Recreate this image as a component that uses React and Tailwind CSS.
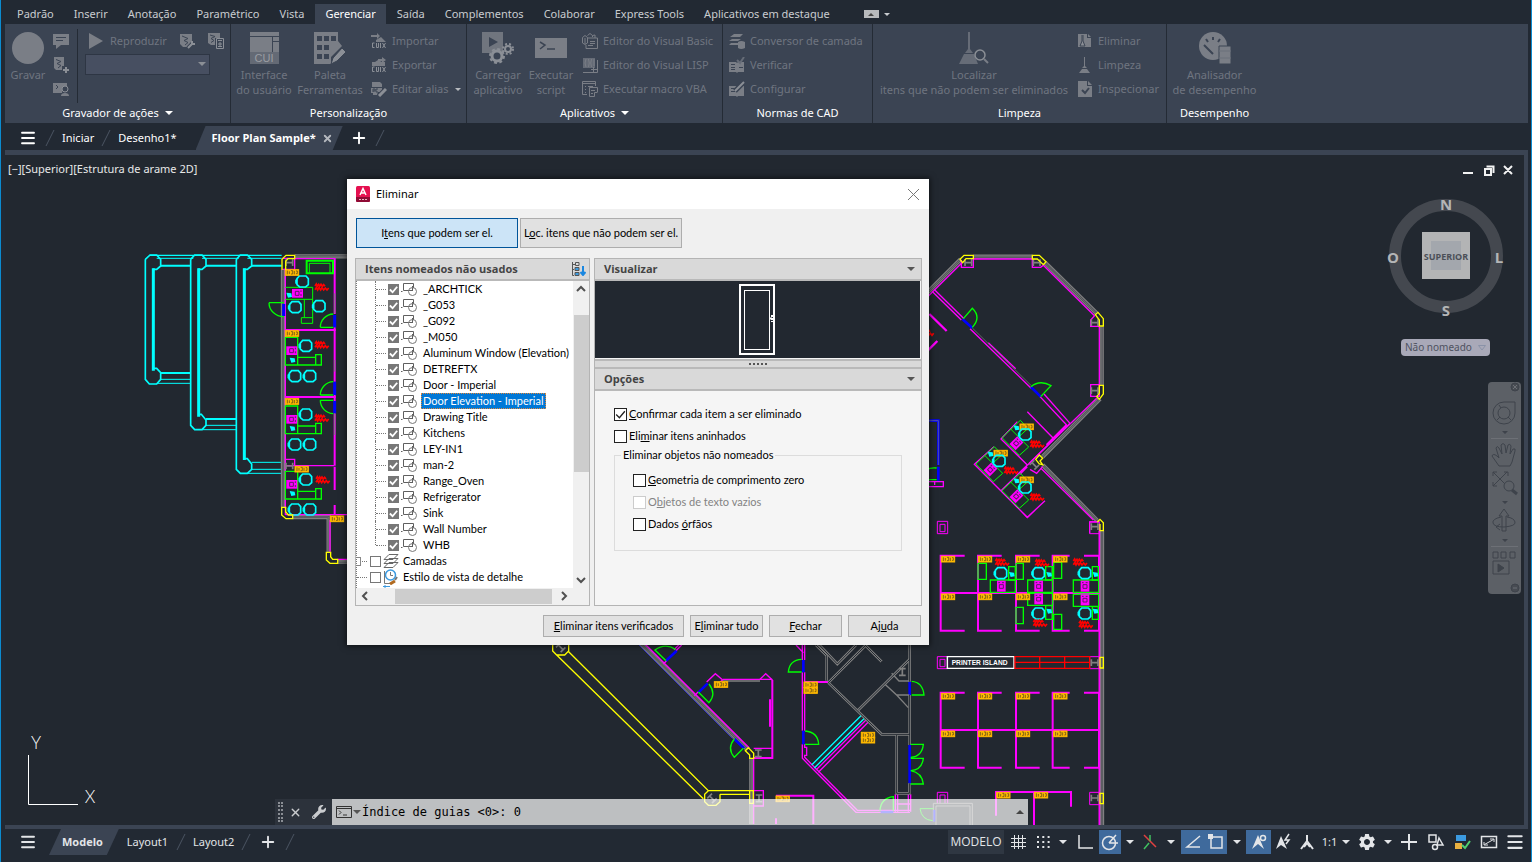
import { useState } from 'react'
import clsx from 'clsx'
import { Menu, Plus, X } from 'lucide-react'
import { FaWrench } from 'react-icons/fa'
import { MdSettings } from 'react-icons/md'

const ribbonTabs = [
  'Padrão', 'Inserir', 'Anotação', 'Paramétrico', 'Vista', 'Gerenciar', 'Saída',
  'Complementos', 'Colaborar', 'Express Tools', 'Aplicativos em destaque'
]

const blocks = [
  '_ARCHTICK', '_G053', '_G092', '_M050', 'Aluminum Window (Elevation)', 'DETREFTX', 'Door - Imperial',
  'Door Elevation - Imperial', 'Drawing Title', 'Kitchens', 'LEY-IN1', 'man-2', 'Range_Oven',
  'Refrigerator', 'Sink', 'Wall Number', 'WHB'
]

const Caret = ({ className }) => (
  <svg viewBox="0 0 8 4" className={clsx('h-1 w-2 shrink-0', className)} fill="currentColor">
    <path d="M0 0H8L4 4Z" />
  </svg>
)

/* ---------- ribbon ---------- */

const Icon = ({ size = 16, children }) => (
  <svg width={size} height={size} viewBox={`0 0 ${size} ${size}`} className="shrink-0" fill="#7a7e86">
    {children}
  </svg>
)

const hole = '#3b4453'

const icons = {
  note: <path d="M0 1H16V12H8L3 16V12H0ZM3 4V5H13V4ZM3 7V8H10V7Z" fillRule="evenodd" />,
  macroAdd: (
    <>
      <path d="M1 0H11V9H9V13H3L1 11Z" />
      <path d="M3 2.500L8 4.500L4 6.500L8 8.500L5 11" fill="none" stroke={hole} />
      <path d="M13 10V16M10 13H16" fill="none" stroke="#8b8f96" strokeWidth="2" />
    </>
  ),
  macroUser: (
    <>
      <path d="M0 2H14V6H9V12H0Z" />
      <path d="M3 4L5 6L3 8" fill="none" stroke={hole} />
      <circle cx="12" cy="8" r="3" fill={hole} stroke="#8b8f96" />
      <path d="M8 15Q8 12 12 12T16 15Z" />
    </>
  ),
  macroEdit: (
    <>
      <path d="M0 1H12V8L8 14H3L0 11Z" />
      <path d="M2 3L8 5.500L4 7.500L8 9.500L5 12" fill="none" stroke={hole} />
      <path d="M8 15L14 9" fill="none" stroke={hole} strokeWidth="4" />
      <path d="M8 15L13 10M12 8V11H15" fill="none" stroke="#8b8f96" strokeWidth="2" />
    </>
  ),
  macroList: (
    <>
      <path d="M0 0H12V5H7V12H3L0 10Z" />
      <path d="M2 2L7 3.500L3 5.500L6 7.500L3 9.500" fill="none" stroke={hole} />
      <path d="M8.500 5.500H15.500V15.500H8.500Z" fill={hole} stroke="#8b8f96" />
      <path d="M10 7.500H14M10 13.500H14M10 11H14M12 9V13" fill="none" stroke="#8b8f96" />
    </>
  ),
  importar: (
    <>
      <path d="M0 2H6V0L9 3L6 6V4H0ZM5 9V7L10 4L15 9Z" />
      <path d="M3.500 10H1.500V14.500H3.500M5.500 10V14.500H7.500V10M9.500 10V15M11.500 10L14.500 15M14.500 10L11.500 15" fill="none" stroke="#8b8f96" />
    </>
  ),
  exportar: (
    <>
      <path d="M1 9V5H4L7 3V2H11V0L15 3L11 6V4L9 5H14V9Z" />
      <path d="M3.500 10H1.500V14.500H3.500M5.500 10V14.500H7.500V10M9.500 10V15M11.500 10L14.500 15M14.500 10L11.500 15" fill="none" stroke="#8b8f96" />
    </>
  ),
  alias: (
    <>
      <path d="M1 1H9L11 3V6H1ZM0 7H11V11H7L6 14H2V12H0Z" />
      <path d="M2 8V11M2 8H4V10H2M7 8H5V11H7" fill="none" stroke={hole} />
      <path d="M8 15L15 8" fill="none" stroke={hole} strokeWidth="5" />
      <path d="M8 15L15 8" fill="none" stroke="#8b8f96" strokeWidth="3" />
    </>
  ),
  basic: (
    <g fill="none" stroke="#7a7e86">
      <path d="M.500 4.500L3 2.500L5.500 4.500V10L3 11.500L.500 10ZM5.500 2.500L8 .500L10.500 2.500V4M10.500 2.500L13 2V5M3 5V11M5.500 5H15.500V15.500H4V12M8 8.500H13M8 10.500H13M6 12.500H11" />
    </g>
  ),
  lisp: (
    <g fill="none" stroke="#7a7e86">
      <path d="M1 1H13V11H1Z" fill="#656b76" stroke="none" />
      <path d="M4 2Q2 6 4 10M6.500 2Q8 6 6.500 10M9.500 2Q8 6 9.500 10M12 2V9M15.500 3V15.500H1M9 12.500H15M11.500 10V15" />
    </g>
  ),
  macroVba: (
    <g fill="none" stroke="#7a7e86">
      <path d="M.500 .500H13.500V5M.500 .500V13.500H5M0 2.500H13M3 5.500H4M6 5.500H11M3 8.500H4M3 11.500H4M7.500 6.500H15.500V11M7.500 6.500V15.500H12.500V11.500H15.500M9 9.500H13M9 12.500H11" />
    </g>
  ),
  layers: (
    <>
      <path d="M5 1H14L11 4H1ZM3 6H12L9 8H0ZM2 10H9V12H0Z" />
      <path d="M9 9Q12 7 16 9V15Q12 17 9 15Z" />
    </>
  ),
  book: (
    <>
      <path d="M0 5H7L8 6L9 5H15V15H9L8 16L7 15H0ZM2 7V8H6V7ZM2 10V11H6V10ZM10 10V11H14V10ZM2 12V13H6V12Z" fillRule="evenodd" />
      <path d="M8 3L11 6L15 0" fill="none" stroke="#666c77" strokeWidth="2" />
    </>
  ),
  bookEdit: (
    <>
      <path d="M0 5H7L8 6L9 5H15V15H9L8 16L7 15H0ZM2 7V8H6V7ZM2 10V11H6V10Z" fillRule="evenodd" />
      <path d="M6 10L14 2" fill="none" stroke={hole} strokeWidth="5" />
      <path d="M6 10L15 1" fill="none" stroke="#8b8f96" strokeWidth="2" />
    </>
  ),
  purge: (
    <>
      <path d="M1 1H10V5H14V14H1ZM11 1L14 4H11Z" />
      <path d="M5 2V8L3 13H8L6 8V2" fill="#8b8f96" stroke={hole} />
    </>
  ),
  broom: <path d="M7 0H8V9L10 11H5L7 9ZM5 12H10L13 16H2Z" />,
  inspect: (
    <>
      <path d="M1 0H10V5H15V16H1ZM11 0L15 4H11Z" />
      <path d="M5 9L8 12L12 7" fill="none" stroke={hole} strokeWidth="2" />
    </>
  )
}

const bigIcons = {
  record: <circle cx="16" cy="16" r="16" />,
  cui: (
    <>
      <path d="M2 0H31V4H2ZM2 5H24V20H2ZM25 5H31V9H25ZM25 10H31V20H25Z" />
      <path d="M2 20H31V32H2Z" fill="#646a75" />
      <text x="16" y="30" textAnchor="middle" fontSize="11" fill="#9a9da3" fontFamily="Liberation Sans, sans-serif">CUI</text>
    </>
  ),
  palette: (
    <>
      <path d="M0 0H24V9L28 14L17 25V32H0ZM3 4V9H8V4ZM10 4V9H15V4ZM17 4V9H22V4ZM3 13V18H8V13ZM10 13V18H15V13ZM3 22V27H8V22ZM10 22V27H15V22Z" fillRule="evenodd" />
      <path d="M17 32L19 26L28 16L32 20L23 29Z" fill="#8b8f96" stroke={hole} />
    </>
  ),
  load: (
    <>
      <path d="M0 0H21V21H0Z" fill="#70757e" />
      <path d="M7 5L16 10L7 15Z" fill={hole} />
      <circle cx="15" cy="24" r="5" fill={hole} stroke="#8b8f96" strokeWidth="3" />
      <circle cx="15" cy="24" r="7" fill="none" stroke="#8b8f96" strokeWidth="2" strokeDasharray="3 2.500" />
      <circle cx="26" cy="17" r="3" fill={hole} stroke="#8b8f96" strokeWidth="2" />
      <circle cx="26" cy="17" r="5" fill="none" stroke="#8b8f96" strokeWidth="2" strokeDasharray="2 2" />
    </>
  ),
  script: (
    <>
      <path d="M0 6H32V26H0Z" />
      <path d="M5 10L10 13L5 17M12 17H20" fill="none" stroke={hole} strokeWidth="1.500" />
    </>
  ),
  find: (
    <>
      <path d="M10 0H12V17L15 21H7L10 17ZM6 22H16L20 32H1Z" fill="#666c77" />
      <circle cx="22" cy="23" r="5" fill={hole} stroke="#8b8f96" strokeWidth="1.500" />
      <path d="M26 27L30 31" stroke="#7a7e86" strokeWidth="2" />
    </>
  ),
  gauge: (
    <>
      <circle cx="14" cy="14" r="14" />
      <path d="M5 13L14 22M14 5V8M7 7L9 10M21 7L19 10" fill="none" stroke={hole} strokeWidth="2" />
      <path d="M20 14H32V32H20Z" stroke={hole} />
      <path d="M20 19H32M20 26H32" stroke="#6a707a" />
    </>
  )
}

const BigButton = ({ icon, lines, className }) => (
  <button className={clsx('flex shrink-0 flex-col items-center pt-[3px] leading-[15px] whitespace-nowrap', className)}>
    <Icon size={32}>{bigIcons[icon]}</Icon>
    <span className="mt-[3px]">{lines[0]}</span>
    <span>{lines[1]}</span>
  </button>
)

const SmallButton = ({ icon, label, caret }) => (
  <button className="flex h-6 items-center gap-[5px] whitespace-nowrap">
    <Icon>{icons[icon]}</Icon>
    {label}
    {caret && <Caret className="h-[3px] w-1.5 text-[#b8bbc0]" />}
  </button>
)

const Panel = ({ title, caret, className, children }) => (
  <section className={clsx('flex shrink-0 flex-col border-[#242b35]', className)}>
    <div className="flex h-[79px] pt-[5px] text-[#6f7580]">{children}</div>
    <h2 className="flex h-5 items-center justify-center gap-1.5 text-white">
      {title}
      {caret && <Caret />}
    </h2>
  </section>
)

const Ribbon = () => (
  <div className="flex h-[99px] shrink-0 overflow-hidden bg-[#3b4453] text-[11px]">
    <Panel title="Gravador de ações" caret className="w-[226px] border-r">
      <BigButton icon="record" lines={['Gravar']} className="w-[46px]" />
      <div className="flex w-[27px] flex-col border-r border-[#242b35] pl-[2px]">
        {['note', 'macroAdd', 'macroUser'].map(name => (
          <button key={name} aria-label={name} className="flex h-6 items-center"><Icon>{icons[name]}</Icon></button>
        ))}
      </div>
      <div className="flex flex-1 flex-col pl-[7px]">
        <div className="flex h-6 items-center">
          <button className="flex w-[95px] items-center gap-[7px] pl-1">
            <svg className="h-4 w-3.5" viewBox="0 0 14 16" fill="#7a7e86"><path d="M0 0L14 8L0 16Z" /></svg>
            Reproduzir
          </button>
          <button aria-label="Editar macro" className="mr-3"><Icon>{icons.macroEdit}</Icon></button>
          <button aria-label="Preferências"><Icon>{icons.macroList}</Icon></button>
        </div>
        <div className="relative mt-px w-[125px]">
          <select aria-label="Macros" className="h-[21px] w-full appearance-none border border-[#2e3644] bg-[#474f61]">
            <option></option>
          </select>
          <Caret className="pointer-events-none absolute top-2 right-1 text-[#8b8f96]" />
        </div>
      </div>
    </Panel>
    <Panel title="Personalização" className="w-[236px] border-r">
      <BigButton icon="cui" lines={['Interface', 'do usuário']} className="w-[66px]" />
      <BigButton icon="palette" lines={['Paleta', 'Ferramentas']} className="w-[66px]" />
      <div className="flex flex-col pl-2">
        <SmallButton icon="importar" label="Importar" />
        <SmallButton icon="exportar" label="Exportar" />
        <SmallButton icon="alias" label="Editar alias" caret />
      </div>
    </Panel>
    <Panel title="Aplicativos" caret className="w-[256px] border-r">
      <BigButton icon="load" lines={['Carregar', 'aplicativo']} className="w-[62px]" />
      <BigButton icon="script" lines={['Executar', 'script']} className="w-[44px]" />
      <div className="flex flex-col pl-[9px]">
        <SmallButton icon="basic" label="Editor do Visual Basic" />
        <SmallButton icon="lisp" label="Editor do Visual LISP" />
        <SmallButton icon="macroVba" label="Executar macro VBA" />
      </div>
    </Panel>
    <Panel title="Normas de CAD" className="w-[150px] border-r">
      <div className="flex flex-col pl-1.5">
        <SmallButton icon="layers" label="Conversor de camada" />
        <SmallButton icon="book" label="Verificar" />
        <SmallButton icon="bookEdit" label="Configurar" />
      </div>
    </Panel>
    <Panel title="Limpeza" className="w-[294px] border-r">
      <BigButton icon="find" lines={['Localizar', 'itens que não podem ser eliminados']} className="w-[202px]" />
      <div className="flex flex-col pl-0.5">
        <SmallButton icon="purge" label="Eliminar" />
        <SmallButton icon="broom" label="Limpeza" />
        <SmallButton icon="inspect" label="Inspecionar" />
      </div>
    </Panel>
    <Panel title="Desempenho" className="w-[95px]">
      <BigButton icon="gauge" lines={['Analisador', 'de desempenho']} className="w-[95px]" />
    </Panel>
  </div>
)

const Slash = () => (
  <svg className="h-5 w-2.5 shrink-0" viewBox="0 0 10 20" stroke="#4b5462" fill="none"><path d="M1 18L9 2" /></svg>
)

const FileTabs = () => (
  <nav className="flex h-[27px] shrink-0 items-center pt-[3px] text-[11px] text-white">
    <button aria-label="Menu" className="pr-2 pl-3.5"><Menu size={18} strokeWidth={2.5} /></button>
    <Slash />
    <button className="px-[7px]">Iniciar</button>
    <Slash />
    <button className="px-[7px]">Desenho1*</button>
    <button className="ml-3 flex h-full items-center gap-1.5 bg-[#3b4453] pr-2.5 pl-4 font-[Open_Sans,sans-serif] font-bold [clip-path:polygon(10px_0,100%_0,calc(100%-10px)_100%,0_100%)]">
      Floor Plan Sample*
      <X size={11} strokeWidth={4} color="#b4b8be" />
    </button>
    <button aria-label="Nova guia" className="px-[7px]"><Plus size={18} strokeWidth={2.5} /></button>
    <Slash />
  </nav>
)

/* ---------- floor plan ---------- */

const M = '#ff00ff'
const C = '#00ffff'
const G = '#00ff00'
const Y = '#ffff00'
const B = '#0000ff'
const GR = '#808080'
const R = '#ff0000'

const Wall = ({ d, w = 13 }) => (
  <>
    <path d={d} stroke={GR} strokeWidth={w} />
    <path d={d} stroke="#4a4e54" strokeWidth="6" />
    <path d={d} stroke={GR} strokeWidth="2" />
  </>
)

const Tag = ({ x, y }) => (
  <g transform={`translate(${x} ${y})`}>
    <rect width="40" height="17" fill="#ffb900" stroke="#ffb900" strokeWidth="3" />
    <path d="M6 3V14M12 5V13M17 3H22V13H17M27 4V14M32 4H36V12H32" stroke="#6b5418" strokeWidth="2.500" />
  </g>
)

const Chair = ({ x, y }) => (
  <path
    transform={`translate(${x} ${y})`}
    d="M-10-16H10L17-8V10L9 17H-9L-17 10V-8ZM-17-6L-20-3V5L-17 8"
    stroke={C}
    strokeWidth="5"
  />
)

const Screen = ({ x, y, turn = 0 }) => (
  <g transform={`translate(${x} ${y}) rotate(${turn})`}>
    <path d="M-13-17H13V16H-13Z" fill={M} />
    <path d="M-6-5H6V6H-6ZM-9-11H-4M2-11H8" stroke="#5c1a66" strokeWidth="3" />
  </g>
)

const Phone = ({ x, y }) => <path transform={`translate(${x} ${y})`} d="M-8-7L7-5L9 6L-3 8Z" fill={C} stroke="none" />

const Name = ({ x, y }) => (
  <path
    transform={`translate(${x} ${y})`}
    d="M0 6L4 0L7 7L11 1L14 7L18 1L22 7L26 2L30 7M0 17L4 11L8 18L12 11L17 18L21 11L26 18L31 12L36 18L41 12"
    stroke={R}
    strokeWidth="5"
  />
)

const Column = ({ x, y, turn = 0 }) => (
  <path transform={`translate(${x} ${y}) rotate(${turn})`} d="M-10-10V10M10-10V10M-10 0H10" stroke={GR} strokeWidth="5" />
)

const WestWing = () => (
  <g transform="translate(130 240) scale(.33333)">
    <g stroke={C} strokeWidth="4">
      <path strokeWidth="5" d="M46 58L60 45H80L92 58V78L80 88H68M46 58V418L58 432H80L92 418V398L80 385H68" />
      <path strokeWidth="5" d="M182 58L194 45H216L228 58V78L216 88H204M182 58V556L194 569H216L228 556V540L214 523H204" />
      <path strokeWidth="5" d="M319 58L331 45H352L365 58V78L352 88H340M319 58V688L331 700H352L365 688V672L352 656H340" />
      <path d="M60 46H455" />
      <path strokeWidth="3" d="M80 55H190M216 55H326M352 55H455M92 418H180M80 430H180M228 556H318M216 569H318M365 667H455M365 688H455M350 700H455" />
      <path strokeWidth="6" d="M92 77H180M228 77H318M365 77H455M92 399H180M228 537H318" />
      <path strokeWidth="9" d="M70 85V392M206 85V530M343 85V660" />
    </g>
    <Wall d="M459 90V802M494 49H652M488 831H596V937M622 965H652" />
    <g stroke={M} strokeWidth="4">
      <path d="M466 85V825M494 56H617M457 55H494V88H457M466 677H612M466 824H652" />
      <path strokeWidth="6" d="M466 270H617M466 471H617" />
      <path d="M600 840V935M622 958H652M466 658H494V677" />
      <path strokeWidth="6" d="M614 56V222M614 262V425M614 465V483M614 520V677M614 680V750M614 795V824" />
      <path stroke={GR} strokeWidth="3" d="M614 160V220M614 360V395M614 520V585" />
    </g>
    <path d="M614 225V262M614 425V465M614 483V520M461 192V228" stroke={B} strokeWidth="9" />
    <g stroke={G} strokeWidth="4">
      <path strokeWidth="6" d="M530 100V62H609V100Z" />
      <path strokeWidth="3" d="M538 100V70H600V100M466 142H548V250H514V233H548M466 178H548M523 178V233" />
      <path d="M417 188H461M417 188A44 42 0 0 0 461 230M571 262H610M571 262A40 40 0 0 1 610 222" />
      <path d="M571 465H610M571 465A40 40 0 0 1 610 425M571 481H610M571 481A40 40 0 0 0 610 521" />
      {[292, 498, 694].map(y => (
        <path key={y} transform={`translate(466 ${y})`} d="M0 0H37V83H0ZM37 60H91V83H37M91 52H108V83H91Z" />
      ))}
    </g>
    {[[518, 124], [496, 201], [568, 198], [528, 317], [495, 408], [540, 408], [528, 523], [495, 613], [540, 613], [528, 718], [495, 808], [540, 808]].map(([x, y]) => (
      <Chair key={`${x}-${y}`} x={x} y={y} />
    ))}
    {[[502, 160], [485, 332], [485, 538], [485, 733]].map(([x, y]) => <Screen key={y} x={x} y={y} turn={90} />)}
    {[[477, 165], [487, 360], [487, 565], [487, 760]].map(([x, y]) => <Phone key={y} x={x} y={y} />)}
    {[[555, 132], [555, 305], [555, 525], [558, 710]].map(([x, y]) => <Name key={y} x={x} y={y} />)}
    {[[466, 89], [466, 272], [466, 476], [495, 679], [601, 828]].map(([x, y]) => <Tag key={y} x={x} y={y} />)}
    <Column x="478" y="68" />
    <Column x="478" y="678" />
    <g stroke={Y} strokeWidth="4">
      <path d="M456 90V58L468 46H494V56H474L467 64V90M455 802V825L468 836H488V825H475L467 815V802ZM589 937V960L600 970H623V958H608L602 950V937Z" />
    </g>
  </g>
)

const NorthEast = () => (
  <g transform="translate(920 240) scale(.33333)">
    <Wall d="M20 160L122 58M160 50H338M375 68L530 220M545 260V435M540 476L368 650M368 675L532 842" />
    <g stroke={M} strokeWidth="4">
      <path d="M20 173L126 68M160 57H338M370 76L524 228M538 260V435M530 475L328 670M362 684L520 840" />
      <path d="M124 60V82H160V57M337 57V82H362L372 74M524 227L512 240V259H538M512 434H538V469H512ZM538 846H509V880M330 688L350 700L368 680" />
      <path d="M42 148L132 236M36 154L124 240M150 266L335 446M205 308L287 386M372 462L450 550M360 470L440 555M450 550L322 676" />
      <path d="M322 515L402 597L396 602M292 545L243 597L322 675L243 752M222 620L163 673L322 832L375 782M300 703L322 680" />
      <path strokeWidth="7" d="M28 222L80 273M20 335L52 303M440 555L380 615" />
      <path d="M20 725H70V740H20M44 725V735" />
    </g>
    <path d="M157 264L335 438" stroke={GR} strokeWidth="2" />
    <path d="M128 238L157 264M333 441L362 470M55 680V722M28 542H55V675" stroke={B} strokeWidth="8" />
    <path d="M20 542H55V675" stroke={GR} strokeWidth="2" />
    <path d="M130 236L157 205Q185 232 157 262M362 470L393 437Q360 418 333 440M20 690Q30 682 50 684M20 719H50" stroke={G} strokeWidth="4" />
    {[[316, 583], [238, 662], [316, 742]].map(([x, y]) => (
      <g key={y} transform={`translate(${x} ${y})`}>
        <path d="M-15-42L-70 10L-18 63L10 38L-43-15M-15-42L8-18L-20 8" stroke={G} strokeWidth="3" />
        <Screen x={-27} y={27} turn={45} />
        <Tag x={-16} y={-31} />
        <Chair x={0} y={0} />
        <Phone x={-27} y={-20} />
        <Name x={15} y={20} />
      </g>
    ))}
    <Name x={0} y={268} />
    <Column x="145" y="68" />
    <Column x="350" y="68" />
    <Column x="524" y="248" />
    <Column x="524" y="452" />
    <Column x="343" y="675" turn={45} />
    <path
      d="M120 58L132 46H160V56H138L128 68ZM337 46H358L378 65L370 74L352 57H337ZM526 224L534 217L550 236V258H538V240ZM550 436V462L538 478L530 470L538 460V436ZM347 658L358 645L368 655L360 663L368 674L358 672Z"
      stroke={Y}
      strokeWidth="4"
    />
  </g>
)

const deskRows = [137, 548]
const tagXs = [64, 175, 289, 401]

const Offices = () => (
  <g transform="translate(920 510) scale(.33333)">
    <Wall d="M546 62V945" />
    <g stroke={M} strokeWidth="3">
      <path d="M52 34H83V71H52ZM60 43H75V65H60ZM52 440H83V476H52ZM60 448H75V470H60ZM52 880V847H83V880M60 880V855H75V880" />
      <path d="M509 35H538V71H509ZM509 440H538V476H509ZM509 847H538V884H509ZM300 0L322 24L346 0" />
      <path strokeWidth="5" d="M538 62V945" />
      {deskRows.map(y => (
        <path
          key={y}
          strokeWidth="6"
          transform={`translate(0 ${y})`}
          d="M134 0H62V225H134M245 0H174V225H245M359 0H288V225H359M449 0H398V225H449M492 0H537V225H492M62 112H537"
        />
      ))}
      <path strokeWidth="6" d="M228 917V846H453V890M342 846V945" />
    </g>
    <g stroke={G} strokeWidth="4">
      <path d="M174 160H199V208H174ZM288 160H310V208H288ZM401 157H425V205H401ZM211 210H286V247H211ZM323 210H398V247H323ZM460 210H536V247H460ZM323 250H398V286H323ZM460 253H536V289H460Z" />
      <path d="M266 170H286V210H266ZM377 170H397V210H377ZM517 170H535V210H517ZM377 287H397V328H377ZM517 290H535V328H517ZM288 292H310V341H288ZM401 313H425V358H401Z" />
    </g>
    {deskRows.map(y => tagXs.map(x => (
      <g key={`${x}-${y}`}>
        <Tag x={x} y={y + 2} />
        <Tag x={x} y={y + 115} />
      </g>
    )))}
    <Tag x={230} y={847} />
    <Tag x={343} y={847} />
    {[[243, 189], [356, 189], [495, 189], [356, 310], [495, 310]].map(([x, y]) => <Chair key={`${x}-${y}`} x={x} y={y} />)}
    {[[244, 229], [356, 229], [495, 229], [356, 267], [495, 270]].map(([x, y]) => <Screen key={`${x}-${y}`} x={x} y={y} />)}
    {[[275, 193], [387, 193], [526, 193], [387, 303], [526, 303]].map(([x, y]) => <Phone key={`${x}-${y}`} x={x} y={y} />)}
    {[[226, 147], [346, 149], [460, 147], [340, 330], [477, 334]].map(([x, y]) => <Name key={x} x={x} y={y} />)}
    <path d="M82 440H282V475H82Z" stroke="#fff" strokeWidth="4" />
    <text x="95" y="465" fontSize="20" fontWeight="700" fill="#fff" fontFamily="Liberation Sans, sans-serif">PRINTER ISLAND</text>
    <path d="M285 440H509V475H285ZM285 457H509M359 440V475M434 440V475" stroke={R} strokeWidth="4" />
    <Column x="524" y="50" />
    <Column x="524" y="458" />
    <Column x="524" y="864" />
    <path d="M532 36L540 28L550 38V62H540V42M540 442H550V474H540ZM540 850H550V881H540Z" stroke={Y} strokeWidth="4" />
    <path d="M40 935V880H157V945M48 945V888H150V945" stroke={GR} strokeWidth="3" />
    <path d="M0 896H40M0 896Q5 930 38 932" stroke={G} strokeWidth="3" />
    <path d="M43 900V935" stroke={B} strokeWidth="6" />
  </g>
)

const South = () => (
  <g transform="translate(540 640) scale(.33333)">
    <g stroke={Y} strokeWidth="4">
      <path d="M50 45L490 476M86 35L505 452H632M540 463H632M38 15V33L50 45H74L86 33V15M505 452L494 463V485L505 496H528L540 485V463" />
    </g>
    <Wall d="M304 12L620 326M634 355V552" />
    <path d="M296 14L578 296" stroke="#3b3bc8" strokeWidth="3" />
    <g stroke={M} strokeWidth="4">
      <path d="M315 12L628 324M425 15L408 32M416 15L402 29M380 62L370 72M475 155L463 167M500 126L526 101L548 120L540 126M660 118L677 101L697 120" />
      <path d="M548 118H697M641 325H697M641 350V552M641 452H670V498H641" />
      <path strokeWidth="6" d="M697 120V354H641M690 178V260M708 467H820V552M708 535V552M792 126H866" />
      <path d="M787 15V60M794 15V60M787 97V272M794 97V272M787 313V355L948 517H1110M794 313V322H800V346H794V352L952 511H1110M768 15L790 38" />
      <path d="M835 397L985 246M828 390L978 240M1066 463V515M1073 463V515M1105 463V515M1112 463V515M1070 492H1110" />
    </g>
    <path d="M548 123H660" stroke={GR} strokeWidth="4" />
    <path d="M378 62L410 32M475 158L503 130M583 297L612 325M790 60V97M790 272V313M1109 125V165M1109 315V432M1022 516H1060" stroke={B} strokeWidth="8" />
    <g stroke={GR} strokeWidth="8">
      <path d="M828 15L860 47V122M838 15L892 72L948 15M865 128L978 15M975 15L1025 65M865 128L1025 283H1110M955 210L1110 57" />
      <path d="M1109 15V57M1109 57V125M1109 165V315M1070 285V460H1108V430" />
      <path strokeWidth="4" d="M1055 100L1077 123H1108M1035 133L1070 165H1108M1070 165L1105 203" />
    </g>
    <g stroke="#222830" strokeWidth="3">
      <path d="M828 15L860 47V122M838 15L892 72L948 15M865 128L978 15M975 15L1025 65M865 128L1025 283H1110M955 210L1110 57" />
      <path d="M1109 15V57M1109 57V125M1109 165V315M1070 285V460H1108V430" />
    </g>
    <path d="M815 375L963 227M823 384L972 236" stroke={C} strokeWidth="4" />
    <g stroke={G} strokeWidth="4">
      <path d="M378 62L345 30Q375 8 407 28M475 156L507 188Q530 162 507 132M610 325L583 352Q560 325 583 297" />
      <path d="M785 96H745Q748 60 785 58M795 313H836Q834 276 795 273M1115 165H1152Q1148 126 1115 124M1112 313H1150Q1146 350 1112 352" />
      <path d="M1112 355H1150Q1146 390 1112 392M1112 432H1150Q1146 398 1112 392M1060 512V470Q1022 475 1020 512" />
    </g>
    {[[523, 125], [792, 126], [792, 143], [964, 277], [964, 292], [708, 468]].map(([x, y]) => <Tag key={`${x}-${y}`} x={x} y={y} />)}
    <Column x="1087" y="96" turn={90} />
    <Column x="655" y="340" turn={90} />
    <Column x="657" y="475" turn={90} />
    <Column x="62" y="22" turn={45} />
    <Column x="516" y="475" turn={45} />
    <path d="M616 332L625 323L641 340V355H629V345ZM629 452H640V490H629Z" stroke={Y} strokeWidth="4" />
  </g>
)

const FloorPlan = () => (
  <svg className="absolute top-0 left-0 h-[670px] w-[1520px]" viewBox="5 155 1520 670" fill="none">
    <WestWing />
    <NorthEast />
    <Offices />
    <South />
    <path d="M28.500 755V804.500H78" stroke="#fff" />
    <g fontSize="17" fill="#fff" textAnchor="middle" fontFamily="Lato, sans-serif" fontWeight="300">
      <text x="36" y="749">Y</text>
      <text x="90" y="803">X</text>
    </g>
  </svg>
)

const ViewCube = () => (
  <svg className="absolute top-[37px] right-[13px] h-[130px] w-[130px]" viewBox="0 0 130 130">
    <circle cx="65" cy="64" r="51" fill="none" stroke="#44484f" strokeWidth="12" />
    <rect x="41" y="40" width="48" height="47" fill="#b3b4b5" />
    <rect x="50" y="49" width="30" height="29" fill="#a3a7ad" />
    <g fontFamily="Open Sans, sans-serif" fontWeight="700" textAnchor="middle" fill="#b4b5b6" fontSize="15">
      <text x="65" y="18">N</text>
      <text x="12" y="71">O</text>
      <text x="118" y="71">L</text>
      <text x="65" y="124">S</text>
      <text x="65" y="68" fontSize="9" fill="#4b4f57">SUPERIOR</text>
    </g>
  </svg>
)

const NavBar = () => (
  <div className="absolute top-[227px] right-[3px] flex h-[212px] w-[33px] flex-col rounded-sm bg-[#5c6066]">
    <svg viewBox="0 0 33 212" className="size-full" fill="none" stroke="#3e434b">
      <circle cx="27" cy="5" r="4" fill="#474b52" />
      <path d="M25 3L29 7M29 3L25 7M3 56.500H30M3 164.500H30" stroke="#6d7076" />
      <path d="M5 31A11 11 0 0 1 16 20H27V31A11 11 0 0 1 5 31Z" />
      <circle cx="16" cy="31" r="6" />
      <path d="M9 38L12 35M23 38L20 35M11 23L13 26" />
      <path d="M14 49H20L17 52ZM14 119H20L17 122ZM14 157H20L17 160Z" fill="#3e434b" stroke="none" />
      <path d="M11 84L4 74Q5 71 9 74L11 76L8 66Q9 63 11 66L14 72L13 63Q15 60 17 63L18 71L20 63Q22 61 23 64L22 72L25 67Q28 66 27 69L24 80L22 84Z" />
      <path d="M5 90L19 104M19 90L5 104M5 94V90H9M16 90H20V94M5 100V104H9" />
      <circle cx="21" cy="104" r="5" fill="#5c6066" />
      <path d="M24 108L29 112" strokeWidth="3" />
      <path d="M14 149V134H11L16 127L21 134H18V149ZM13 135Q4 137 5 141T16 145Q28 144 27 140T19 135M12 142L8 145L12 148" />
      <path d="M5 170H10V176H5ZM13 170H18V176H13ZM22 170H27V176H22ZM5 179H21V192H5Z" />
      <path d="M10 182L16 186L10 190Z" fill="#3e434b" />
      <circle cx="27" cy="206" r="4" fill="#474b52" />
      <path d="M25 206H29" stroke="#6d7076" />
    </svg>
  </div>
)

/* ---------- purge dialog ---------- */

const Tick = ({ id, label, tone, disabled, defaultChecked }) => (
  <span className={clsx('relative flex shrink-0', tone === 'tree' ? 'size-[11px]' : 'size-[13px]')}>
    <input
      type="checkbox"
      id={id}
      aria-label={label}
      disabled={disabled}
      defaultChecked={defaultChecked}
      className={clsx(
        'peer size-full appearance-none border bg-white disabled:border-[#ccc]',
        tone === 'tree' ? 'border-[#777] checked:bg-[#777]' : 'border-[#222]'
      )}
    />
    <svg
      viewBox="0 0 12 12"
      className={clsx('pointer-events-none absolute inset-0 hidden size-full peer-checked:block', tone === 'tree' ? 'text-white' : 'text-[#222]')}
      fill="none"
      stroke="currentColor"
      strokeWidth={tone === 'tree' ? 2 : 1.2}
    >
      <path d="M2 6L5 9L10 3" />
    </svg>
  </span>
)

const BlockIcon = () => (
  <svg className="h-4 w-4 shrink-0" viewBox="0 0 16 16" fill="none" stroke="#5f5f5f">
    <path d="M8 9.500H2.500V2.500H12.500V7M0 10.500H1.500M5 9.500H12M11.500 5V10" />
    <circle cx="11.500" cy="10.500" r="4" stroke="#777" />
  </svg>
)

const BlockRow = ({ name, last, selected, onSelect }) => (
  <li className="flex h-4 items-center">
    <span className={clsx('ml-[18px] w-0 self-stretch border-l border-dotted border-[#777]', last && 'mb-2')} />
    <span className="mr-0.5 w-2.5 border-t border-dotted border-[#777]" />
    <span className="mr-0.5"><Tick tone="tree" label={name} defaultChecked /></span>
    <BlockIcon />
    <button
      onClick={onSelect}
      className={clsx(
        'ml-1 h-4 border px-px leading-[14px] whitespace-nowrap',
        selected ? 'border-dotted border-[#e0873a] bg-[#0078d7] text-white' : 'border-transparent'
      )}
    >
      {name}
    </button>
  </li>
)

const TreeView = () => {
  const [selected, setSelected] = useState('Door Elevation - Imperial')
  return (
    <section className="flex w-[235px] flex-col border border-[#b4b4b4] bg-[#f0f0f0]">
      <div className="flex h-[22px] items-center justify-between border-b-2 border-[#b9b9b9] bg-[#d9d9d9] pr-[3px] pl-[9px]">
        <h2 className="font-[Open_Sans,sans-serif] text-[11px] font-bold text-[#444]">Itens nomeados não usados</h2>
        <button aria-label="Expandir árvore">
          <svg className="h-3.5 w-3.5" viewBox="0 0 14 14" fill="none" stroke="#555">
            <path d="M.500 0V13.500H2M.500 7.500H2M3.500 .500H7V3.500H3.500ZM0 2.500H3" />
            <path d="M3 5.500H7V8.500H3ZM3 10.500H7V13.500H3Z" fill="#3b9ae0" />
            <path d="M11 4V12M8.500 10L11 13L13.500 10" stroke="#1a87e0" strokeWidth="2" />
          </svg>
        </button>
      </div>
      <div className="flex h-[307px]">
        <ul className="flex-1 overflow-hidden border-l border-dotted border-[#777] bg-white">
          {blocks.map((name, i) => (
            <BlockRow
              key={name}
              name={name}
              last={i === blocks.length - 1}
              selected={name === selected}
              onSelect={() => setSelected(name)}
            />
          ))}
          <li className="flex h-4 items-center">
            <span className="mr-px h-[9px] w-1 border border-l-0 border-[#888]" />
            <span className="mr-[3px] w-[5px] border-t border-dotted border-[#777]" />
            <Tick tone="tree" label="Camadas" />
            <svg className="mr-1 ml-0.5 h-4 w-4" viewBox="0 0 16 16" fill="#fff" stroke="#666">
              <path d="M1 14.500L6 9.500H15L10 14.500ZM1 10.500L6 5.500H15L10 10.500ZM1 6.500L6 1.500H15L10 6.500Z" />
            </svg>
            Camadas
          </li>
          <li className="flex h-4 items-center">
            <span className="mr-[3px] w-2.5 border-t border-dotted border-[#777]" />
            <Tick tone="tree" label="Estilo de vista de detalhe" />
            <svg className="mr-1 ml-0.5 h-4 w-4" viewBox="0 0 16 16" fill="none" stroke="#777">
              <path d="M1.500 2V14.500H9" />
              <circle cx="7.500" cy="6" r="5" fill="#fff" stroke="#3b9ae0" strokeWidth="1.500" />
              <path d="M7.500 3V6.500H10" />
              <path d="M14 8L12 11" strokeWidth="2" />
              <path d="M7 15L12 12" stroke="#b06a20" strokeWidth="3" />
            </svg>
            Estilo de vista de detalhe
          </li>
          <li className="flex h-4">
            <svg className="ml-[25px] h-4 w-4" viewBox="0 0 16 16" fill="none" stroke="#3b9ae0"><path d="M1 1.500H8M3 0V4" /></svg>
          </li>
        </ul>
        <div className="flex w-4 flex-col items-center bg-[#f0f0f0] py-1">
          <svg className="h-2 w-2.5" viewBox="0 0 10 8" fill="none" stroke="#505050" strokeWidth="2"><path d="M1 6L5 2L9 6" /></svg>
          <span className="mt-[22px] h-[157px] w-[15px] bg-[#cdcdcd]" />
          <svg className="mt-auto h-2 w-2.5" viewBox="0 0 10 8" fill="none" stroke="#505050" strokeWidth="2"><path d="M1 2L5 6L9 2" /></svg>
        </div>
      </div>
      <div className="flex h-4 items-center pr-[21px] pl-[5px]">
        <svg className="h-2.5 w-2" viewBox="0 0 8 10" fill="none" stroke="#505050" strokeWidth="2"><path d="M6 1L2 5L6 9" /></svg>
        <span className="ml-[26px] h-[15px] w-[157px] bg-[#cdcdcd]" />
        <svg className="ml-auto h-2.5 w-2" viewBox="0 0 8 10" fill="none" stroke="#505050" strokeWidth="2"><path d="M2 1L6 5L2 9" /></svg>
      </div>
    </section>
  )
}

const PaneHeader = ({ children }) => (
  <div className="flex h-[22px] items-center justify-between border-b-2 border-[#b9b9b9] bg-[#d9d9d9] pr-1.5 pl-[9px] text-[#444]">
    <h2 className="font-[Open_Sans,sans-serif] text-[11px] font-bold">{children}</h2>
    <Caret className="text-[#555]" />
  </div>
)

const Option = ({ id, children, disabled, defaultChecked }) => (
  <div className={clsx('flex h-[22px] items-center gap-[2px]', disabled && 'text-[#838383]')}>
    <Tick id={id} disabled={disabled} defaultChecked={defaultChecked} />
    <label htmlFor={id}>{children}</label>
  </div>
)

const FooterButton = ({ className, children }) => (
  <button className={clsx('h-[22px] border border-[#adadad] bg-[#e1e1e1] whitespace-nowrap', className)}>{children}</button>
)

const PurgeDialog = () => (
  <div
    role="dialog"
    aria-label="Eliminar"
    className="absolute top-6 left-[342px] flex w-[582px] flex-col bg-[#f0f0f0] font-[Lato,sans-serif] text-[11px] text-black shadow-[0_0_6px_1px_rgba(0,0,0,0.6)]"
  >
    <header className="flex h-[30px] items-center bg-white pr-[10px] pl-[9px]">
      <svg className="h-4 w-3.5" viewBox="0 0 14 16">
        <rect width="14" height="16" rx="1.500" fill="#e51050" />
        <path d="M0 11H14V14.500Q14 16 12.500 16H1.500Q0 16 0 14.500Z" fill="#8f0b35" />
        <path d="M4 9L7 2.500L10 9M5.500 7H8.500" fill="none" stroke="#fff" strokeWidth="1.500" />
        <path d="M3 13.500H11" stroke="#e8b7c5" strokeDasharray="2 1" />
      </svg>
      <h1 className="ml-1.5 flex-1 font-[Noto_Sans,sans-serif]">Eliminar</h1>
      <button aria-label="Fechar">
        <svg className="h-[11px] w-[11px]" viewBox="0 0 11 11" stroke="#777"><path d="M0 0L11 11M11 0L0 11" /></svg>
      </button>
    </header>
    <div className="flex flex-col pt-[9px] pr-[7px] pb-2 pl-2">
      <div className="flex gap-[2px] pl-px">
        <button className="h-[30px] w-[162px] border border-[#005499] bg-[#cce4f7]">I<u>t</u>ens que podem ser el.</button>
        <button className="h-[30px] w-[162px] border border-[#adadad] bg-[#e1e1e1] whitespace-nowrap">L<u>o</u>c. itens que não podem ser el.</button>
      </div>
      <div className="mt-2.5 flex h-[348px] gap-1">
        <TreeView />
        <section className="flex flex-1 flex-col border border-[#b4b4b4] bg-[#f5f5f5]">
          <PaneHeader>Visualizar</PaneHeader>
          <div className="mr-px flex h-[77px] shrink-0 items-center justify-center bg-[#222830] pr-px">
            <svg className="h-[71px] w-9" viewBox="0 0 36 71" fill="none" stroke="#fff">
              <rect x="1" y="1" width="34" height="69" strokeWidth="2" />
              <rect x="5.500" y="6.500" width="25" height="59" />
              <path d="M33 31V38M31 34.500H35" strokeWidth="2" strokeDasharray="2 1" />
            </svg>
          </div>
          <div className="mt-px flex h-2.5 items-center justify-center border-y-2 border-[#b9b9b9] bg-[#d9d9d9]">
            <span className="w-[18px] border-t-2 border-dotted border-[#555]" />
          </div>
          <PaneHeader>Opções</PaneHeader>
          <div className="flex flex-1 flex-col px-[19px] pt-3">
            <Option id="confirm" defaultChecked><u>C</u>onfirmar cada item a ser eliminado</Option>
            <Option id="nested">Eli<u>m</u>inar itens aninhados</Option>
            <fieldset className="h-[104px] border border-[#dcdcdc] px-[18px]">
              <legend className="-ml-3 px-[2px] leading-4">Eliminar objetos não nomeados</legend>
              <div className="pt-1.5">
                <Option id="zero"><u>G</u>eometria de comprimento zero</Option>
                <Option id="empty" disabled>O<u>b</u>jetos de texto vazios</Option>
                <Option id="orphan">Dados <u>ó</u>rfãos</Option>
              </div>
            </fieldset>
          </div>
        </section>
      </div>
      <footer className="mt-[9px] flex justify-end gap-1.5 pr-px">
        <FooterButton className="w-[141px]"><u>E</u>liminar itens verificados</FooterButton>
        <FooterButton className="w-[73px]">E<u>l</u>iminar tudo</FooterButton>
        <FooterButton className="w-[73px]"><u>F</u>echar</FooterButton>
        <FooterButton className="w-[73px]">Aj<u>u</u>da</FooterButton>
      </footer>
    </div>
  </div>
)

const CommandLine = () => (
  <div className="absolute bottom-0 left-[270px] flex h-[26px] w-[753px] items-stretch">
    <div className="flex w-[57px] items-center bg-[#2c323b]">
      <span className="ml-[3px] h-5 w-[5px] border-x-2 border-dotted border-[#8a8e94]" />
      <button aria-label="Fechar linha de comando" className="ml-1.5"><X size={13} strokeWidth={2.5} color="#c9cbce" /></button>
      <button aria-label="Personalizar" className="ml-2.5"><FaWrench size={14} color="#c9cbce" /></button>
    </div>
    <label className="flex flex-1 items-center bg-white/70 pl-1">
      <svg className="h-3 w-4" viewBox="0 0 16 12" fill="none" stroke="#333"><path d="M.500 .500H15.500V11.500H.500ZM0 2.500H16M3 4.500L5 6.500L3 8.500M7 9H11" /></svg>
      <Caret className="mr-px ml-px text-[#555]" />
      <input
        defaultValue="Índice de guias <0>: 0"
        aria-label="Linha de comando"
        className="min-w-0 flex-1 bg-transparent font-['DejaVu_Sans_Mono',monospace] text-[12px] text-black"
      />
      <Caret className="mr-1 rotate-180 text-[#444]" />
    </label>
  </div>
)

const Canvas = () => (
  <main className="relative flex-1 overflow-hidden bg-[#222830]">
    <FloorPlan />
    <p className="absolute top-1.5 left-[3px] text-[11px] text-[#e8e8e8]">[−][Superior][Estrutura de arame 2D]</p>
    <svg className="absolute top-2.5 right-2.5 h-3 w-[52px]" viewBox="0 0 52 12" fill="none" stroke="#f2f2f2" strokeWidth="2">
      <path d="M1 8H11M23 4H29V10H23ZM24.500 1.500H31.500V8M42 1L50 9M50 1L42 9" />
    </svg>
    <ViewCube />
    <button className="absolute top-[184px] right-[34px] flex h-[17px] w-[89px] items-center gap-1.5 rounded bg-[#a9a9b8] pl-1 text-[10px] text-[#4e5260]">
      Não nomeado
      <svg className="h-1.5 w-2" viewBox="0 0 8 6" fill="none" stroke="#8a92a8"><path d="M.500 .500H7.500L4 5Z" /></svg>
    </button>
    <NavBar />
    <PurgeDialog />
    <CommandLine />
  </main>
)

/* ---------- status bar ---------- */

const StatusIcon = ({ children }) => (
  <svg width="18" height="18" viewBox="0 0 18 18" fill="none" stroke="currentColor" strokeWidth="1.500">{children}</svg>
)

const statusItems = [
  { id: 'Grade', w: 'w-[28px]', icon: <StatusIcon><path d="M5.500 2V16M9.500 2V16M13.500 2V16M2 5.500H17M2 9.500H17M2 13.500H17" strokeWidth="1" /></StatusIcon> },
  { id: 'Snap', w: 'w-[22px]', icon: <StatusIcon><path d="M3 4H16M3 9H16M3 14H16" strokeWidth="2" strokeDasharray="2 3.300" /></StatusIcon> },
  { id: 'Opções de snap', w: 'w-[18px]', icon: <Caret /> },
  { id: 'Orto', w: 'w-[27px]', icon: <StatusIcon><path d="M2 2V15H16" /></StatusIcon> },
  { id: 'Polar', w: 'w-[22px]', on: true, icon: <StatusIcon><circle cx="8" cy="10" r="6.500" /><path d="M8 10L15 2M8 10H17" /></StatusIcon> },
  { id: 'Opções de polar', w: 'w-[18px]', icon: <Caret /> },
  { id: 'Isométrico', w: 'w-[22px]', icon: <StatusIcon><path d="M3 2L15 14" stroke="#e04040" /><path d="M9 2V8M3 16L8 10" stroke="#40c060" /></StatusIcon> },
  { id: 'Opções de isométrico', w: 'w-[20px]', icon: <Caret /> },
  { id: 'Rastreamento', w: 'w-[23px]', on: true, icon: <StatusIcon><path d="M16 3L3 14H16" /></StatusIcon> },
  { id: 'Snap de objeto', w: 'w-[23px]', on: true, icon: <StatusIcon><path d="M4 4H15V15H4Z" /><path d="M1 1H6V6H1Z" fill="currentColor" stroke="none" /></StatusIcon> },
  { id: 'Opções de snap de objeto', w: 'w-[19px]', icon: <Caret /> },
  { id: 'Anotação', w: 'w-[25px]', on: true, icon: <StatusIcon><path d="M8 2L2 16L8 11L14 16Z" fill="currentColor" stroke="none" /><circle cx="13" cy="5" r="2.500" /></StatusIcon> },
  { id: 'Autoescala', w: 'w-[24px]', icon: <StatusIcon><path d="M7 3L2 16L7 12L13 16Z" fill="currentColor" stroke="none" /><path d="M15 1L11 7H15L12 11" /></StatusIcon> },
  { id: 'Escala', w: 'w-[24px]', icon: <StatusIcon><path d="M9 2V8L3 16M9 8L15 16M9 10L6 14M9 10L12 14" strokeWidth="2" /></StatusIcon> },
  { id: '1:1', w: 'w-[21px]', icon: '1:1' },
  { id: 'Opções de escala', w: 'w-[12px]', icon: <Caret /> },
  { id: 'Espaço de trabalho', w: 'w-[30px]', icon: <MdSettings size={20} /> },
  { id: 'Opções de espaço', w: 'w-[12px]', icon: <Caret /> },
  { id: 'Monitor', w: 'w-[29px]', icon: <StatusIcon><path d="M9 1V17M1 9H17" strokeWidth="2" /></StatusIcon> },
  { id: 'Isolar', w: 'w-[26px]', icon: <StatusIcon><path d="M2 2H9V9H2ZM12 5L16 12H10Z" /><circle cx="8" cy="14" r="2.500" /></StatusIcon> },
  { id: 'Desempenho gráfico', w: 'w-[26px]', icon: <StatusIcon><path d="M3 2H13V8H3Z" fill="#3b9ae0" stroke="none" /><path d="M2 10H9V16H2Z" fill="#e8b040" stroke="none" /><path d="M9 12L12 15L17 8" stroke="#50d070" strokeWidth="2" /></StatusIcon> },
  { id: 'Tela limpa', w: 'w-[27px]', icon: <StatusIcon><path d="M1.500 3.500H16.500V14.500H1.500Z" /><path d="M10 6H14V9M8 12H4V9M13.500 6.500L4.500 11.500" strokeWidth="1" /></StatusIcon> },
  { id: 'Personalização', w: 'w-[26px]', icon: <Menu size={20} strokeWidth={2.5} /> }
]

const StatusBar = () => (
  <footer className="flex h-[37px] shrink-0 items-center border-t-4 border-[#3b4453] pb-[7px] text-[11px] text-[#e3e5e8]">
    <button aria-label="Menu de layout" className="pr-3 pl-3.5"><Menu size={18} strokeWidth={2.5} /></button>
    <button className="h-full bg-[#3b4453] pr-4 pl-[13px] font-[Open_Sans,sans-serif] font-bold [clip-path:polygon(12px_0,100%_0,calc(100%-12px)_100%,0_100%)]">Modelo</button>
    <button className="px-2">Layout1</button>
    <Slash />
    <button className="px-[7px]">Layout2</button>
    <Slash />
    <button aria-label="Novo layout" className="px-2"><Plus size={18} strokeWidth={2.5} /></button>
    <Slash />
    <div className="ml-auto flex h-6 items-stretch">
      <button className="w-14 bg-[#2f3742] font-[Open_Sans,sans-serif] text-[12px]">MODELO</button>
      {statusItems.map(({ id, w, on, icon }) => (
        <button key={id} aria-label={id} className={clsx('flex items-center justify-center', w, on && 'bg-[#3f6a9c]')}>
          {icon}
        </button>
      ))}
    </div>
  </footer>
)

export default function App() {
  return (
    <div className="flex h-screen min-h-[640px] flex-col overflow-hidden border-x border-[#0b8bd0] bg-[#222933] pr-[3px] pl-1 font-['Noto_Sans',sans-serif]">
      <nav className="flex h-6 shrink-0 items-end pl-0.5 text-[11px] text-[#c9ccd0]">
        {ribbonTabs.map(tab => (
          <button
            key={tab}
            className={clsx('h-5 px-2.5 whitespace-nowrap', tab === 'Gerenciar' && 'mx-px bg-[#3b4453] text-white')}
          >
            {tab}
          </button>
        ))}
        <button aria-label="Minimizar faixa" className="ml-6 flex h-5 items-center gap-1">
          <span className="flex h-2 w-[15px] items-center justify-center bg-[#b8babd]"><Caret className="h-[3px] w-1.5 rotate-180 text-[#444]" /></span>
          <Caret className="h-[3px] w-1.5" />
        </button>
      </nav>
      <Ribbon />
      <FileTabs />
      <div className="flex min-h-0 flex-1 border-t-[5px] border-r-4 border-[#3b4453]">
        <div className="flex min-w-0 flex-1 flex-col"><Canvas /></div>
      </div>
      <StatusBar />
    </div>
  )
}
